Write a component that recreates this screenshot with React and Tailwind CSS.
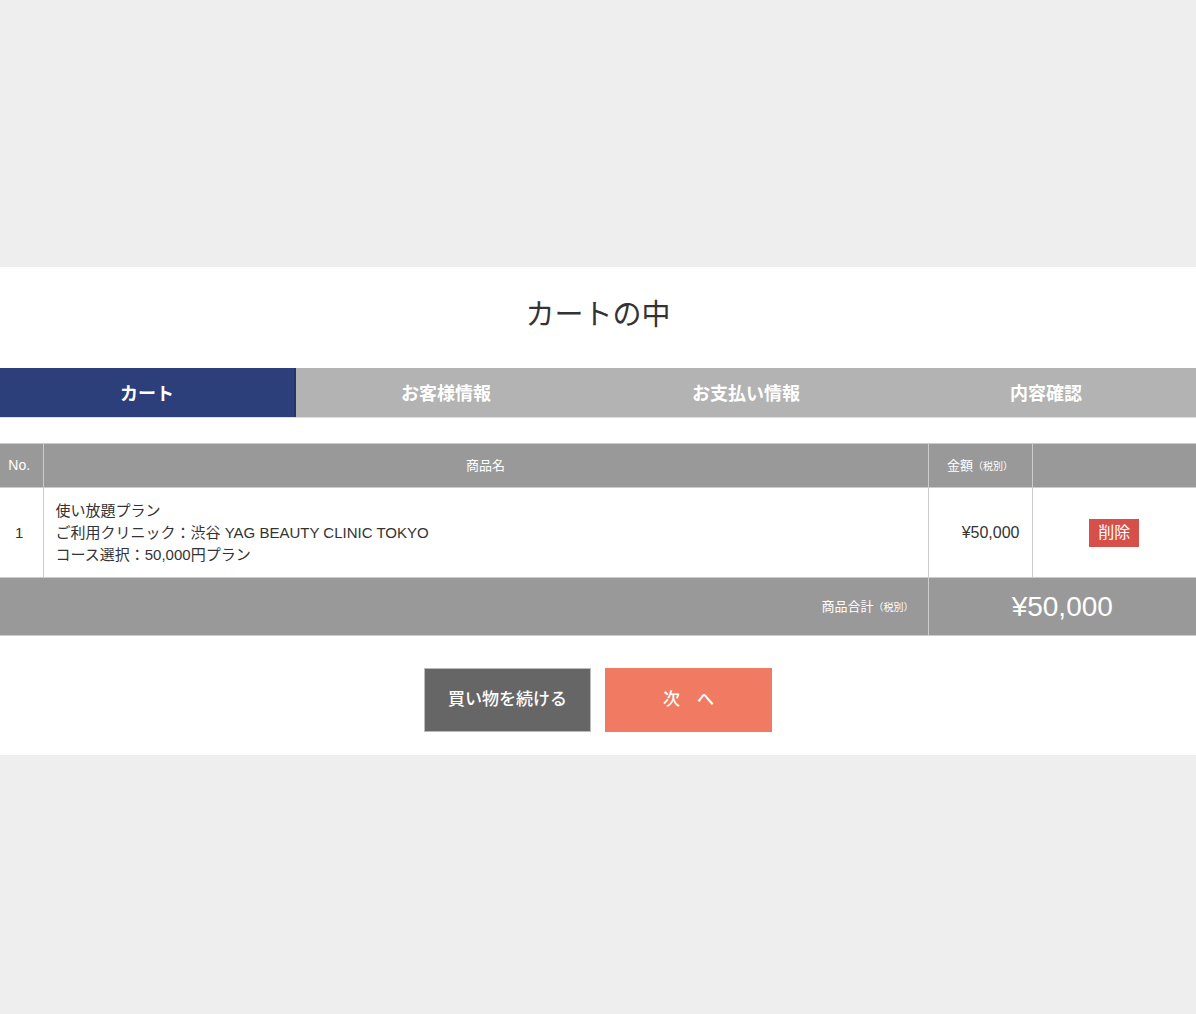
import React from "react";

const jp = { fontFamily: '"Liberation Sans", "Noto Sans CJK JP", sans-serif' };

const steps = ["カート", "お客様情報", "お支払い情報", "内容確認"];

const App = () => {
  return (
    <div className="min-h-[1014px] bg-[#eeeeee] pt-[267px] text-[#333]" style={jp}>
      <div className="bg-white pb-[23px]">
        <h1 className="pt-[28px] pb-[33px] text-center text-[29px] leading-[40px] text-[#333]">
          カートの中
        </h1>

        {/* steps */}
        <div className="grid grid-cols-[296px_1fr_1fr_1fr] border-b border-[#dddddd]">
          {steps.map((s, i) => (
            <div
              key={s}
              className={
                i === 0
                  ? "h-[49px] pt-[3px] flex items-center justify-center bg-[#2c3f7b] border-r-2 border-[#24356b] text-white text-[18px] font-bold"
                  : "h-[49px] pt-[3px] flex items-center justify-center bg-[#b3b3b3] text-white text-[18px] font-bold"
              }
            >
              {s}
            </div>
          ))}
        </div>

        {/* cart table */}
        <table className="mt-[25px] w-full border-collapse table-fixed">
          <colgroup>
            <col className="w-[43px]" />
            <col />
            <col className="w-[104px]" />
            <col className="w-[164px]" />
          </colgroup>
          <thead>
            <tr className="h-[44px] bg-[#999999] text-white text-[13px]">
              <th className="border border-[#cccccc] border-l-0 font-normal text-[14px] pr-1">No.</th>
              <th className="border border-[#cccccc] font-normal">商品名</th>
              <th className="border border-[#cccccc] font-normal">
                金額<span className="text-[10px]">（税別）</span>
              </th>
              <th className="border border-[#cccccc] border-r-0"></th>
            </tr>
          </thead>
          <tbody>
            <tr className="h-[90px] text-[15px] leading-[22px]">
              <td className="border border-[#cccccc] border-l-0 text-center pr-1">1</td>
              <td className="border border-[#cccccc] px-3">
                <p>使い放題プラン</p>
                <p>ご利用クリニック：渋谷 YAG BEAUTY CLINIC TOKYO</p>
                <p>コース選択：50,000円プラン</p>
              </td>
              <td className="border border-[#cccccc] text-right pr-3 text-[16px]">¥50,000</td>
              <td className="border border-[#cccccc] border-r-0 text-center">
                <button className="h-[28px] w-[50px] bg-[#d64f4a] text-white text-[16px] leading-[28px]">
                  削除
                </button>
              </td>
            </tr>
            <tr className="h-[58px] bg-[#999999] text-white">
              <td colSpan={2} className="border border-[#cccccc] border-l-0 text-right pr-[14px] text-[13px]">
                商品合計<span className="text-[10px]">（税別）</span>
              </td>
              <td colSpan={2} className="border border-[#cccccc] border-r-0 text-center text-[28px]">
                ¥50,000
              </td>
            </tr>
          </tbody>
        </table>

        {/* buttons */}
        <div className="mt-[32px] flex justify-center gap-[14px]">
          <button className="h-[64px] w-[167px] bg-[#666666] border border-[#bbbbbb] text-white text-[17px] font-medium">
            買い物を続ける
          </button>
          <button className="h-[64px] w-[167px] bg-[#f07b62] text-white text-[17px] font-medium">
            次　へ
          </button>
        </div>
      </div>
    </div>
  );
};

export default App;
